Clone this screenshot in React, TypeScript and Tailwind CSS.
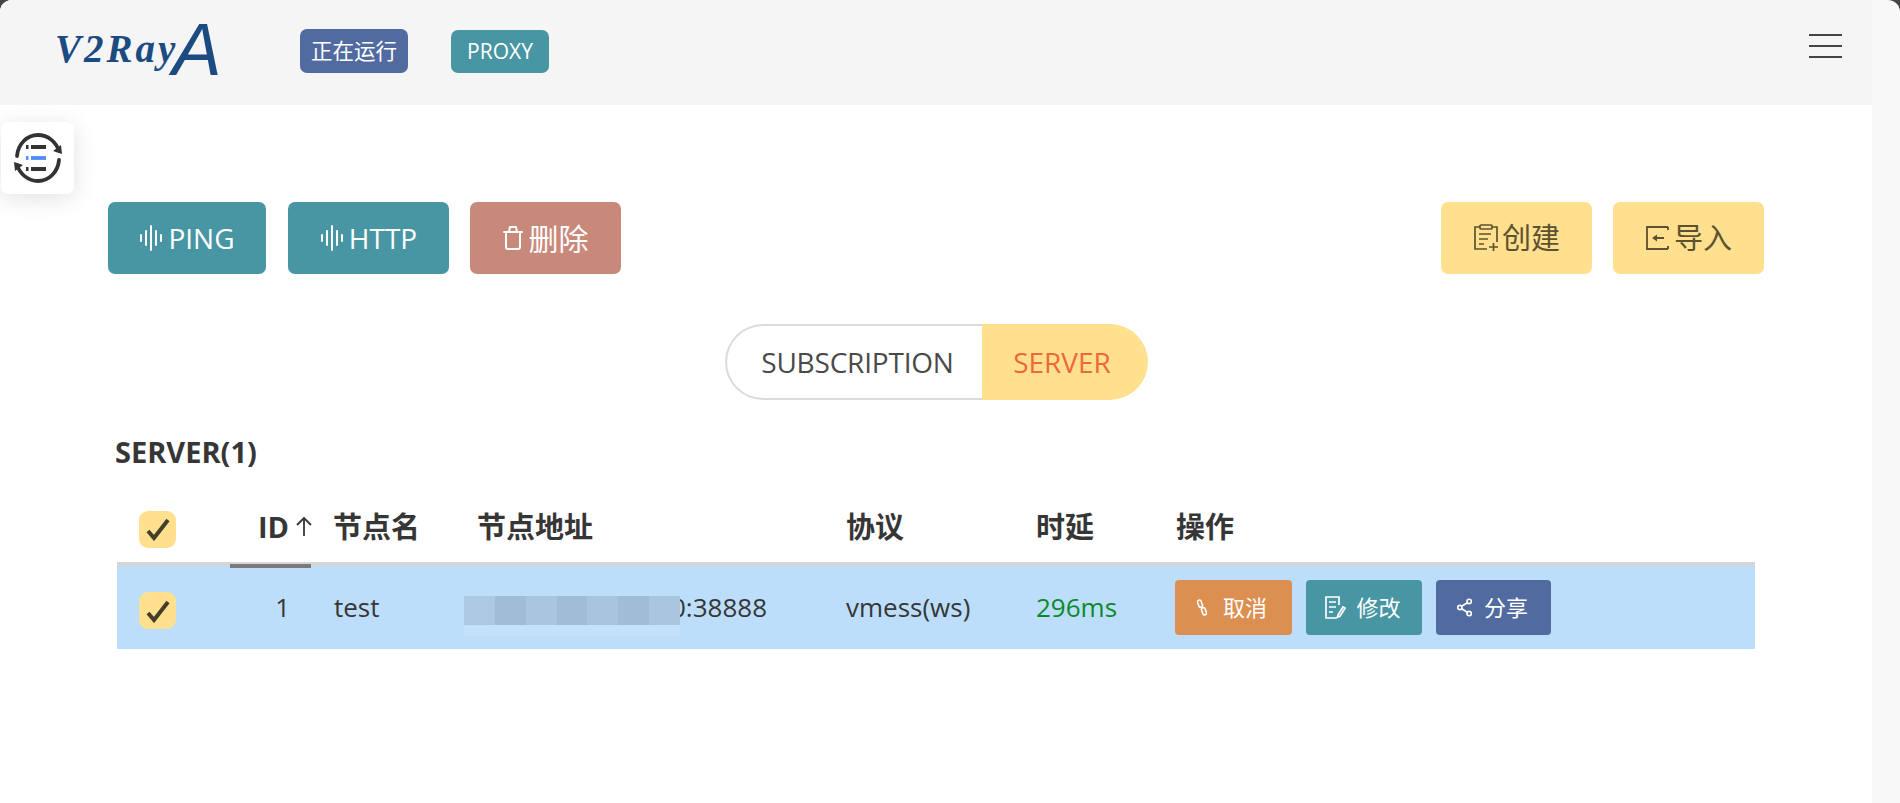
const F = '[font-family:"Open_Sans","Noto_Sans_CJK_SC",sans-serif]';

function Wave() {
  return (
    <svg width="24" height="26" viewBox="0 0 24 26" fill="none" stroke="currentColor" strokeWidth="2" strokeLinecap="round">
      <path d="M2 10v6M7 6v14M12 1v24M17 6v14M22 10v6" />
    </svg>
  );
}
function Trash() {
  return (
    <svg width="20" height="26" viewBox="0 0 20 26" fill="none" stroke="currentColor" strokeWidth="2" strokeLinejoin="round" strokeLinecap="round">
      <path d="M1 7h18M3 7v15a2 2 0 0 0 2 2h10a2 2 0 0 0 2-2V7M6 7l1-5h6l1 5" />
    </svg>
  );
}
function Clip() {
  return (
    <svg width="26" height="28" viewBox="0 0 26 28" fill="none" stroke="currentColor" strokeWidth="1.700">
      <path d="M7 3H2v22h12M19 3h5v15" />
      <rect x="7" y="1" width="12" height="4" rx="1" />
      <path d="M6 10h12M6 15h9M6 20h5M16 23h9M20.500 19v8" />
    </svg>
  );
}
function Imp() {
  return (
    <svg width="24" height="26" viewBox="0 0 24 26" fill="none" stroke="currentColor" strokeWidth="1.800">
      <path d="M23 2H2v22h21M23 2v3M23 24v-3M19 13H11" />
      <path d="M12 9.500l-5 3.500 5 3.500z" fill="currentColor" stroke="none" />
    </svg>
  );
}
function Chain() {
  return (
    <svg width="10" height="17" viewBox="0 0 10 17" fill="none" stroke="currentColor" strokeWidth="1.600">
      <rect x="1.200" y="1" width="3.800" height="7.500" rx="1.900" transform="rotate(-18 3 5)" />
      <rect x="5" y="8.500" width="3.800" height="7.500" rx="1.900" transform="rotate(-18 7 12)" />
    </svg>
  );
}
function Edit() {
  return (
    <svg width="21" height="23" viewBox="0 0 21 23" fill="none" stroke="currentColor" strokeWidth="1.700">
      <path d="M14 9V1H1v21h11M4 6h7M4 11h7M4 16h4M13 19l5-8 2 1.200-5 8-2.500 1z" />
    </svg>
  );
}
function Share() {
  return (
    <svg width="15" height="19" viewBox="0 0 16 20" fill="none" stroke="currentColor" strokeWidth="1.800">
      <circle cx="13" cy="3.500" r="2.300" />
      <circle cx="3" cy="10" r="2.300" />
      <circle cx="13" cy="16.500" r="2.300" />
      <path d="M11 5L5 8.700M5 11.300L11 15" />
    </svg>
  );
}
function Check() {
  return (
    <span className="flex h-[37px] w-[37px] items-center justify-center rounded-[9px] bg-[#fee08f]">
      <svg width="26" height="24" viewBox="0 0 26 24" fill="none" stroke="#453f2a" strokeWidth="4">
        <path d="M3 14l6 7L23 3" />
      </svg>
    </span>
  );
}
function ArrowUp() {
  return (
    <svg width="18" height="20" viewBox="0 0 18 20" fill="none" stroke="#363636" strokeWidth="1.800">
      <path d="M9 20V2M2 9l7-7 7 7" />
    </svg>
  );
}
function ListSync() {
  return (
    <svg width="48" height="50" viewBox="0 0 48 50" fill="none" strokeWidth="3.800">
      <path d="M3 23C4 11 13 2 24 2c10 0 18 7 21 16M45 27c-1 12-10 21-21 21-10 0-18-7-21-16" stroke="#333" strokeLinecap="round" />
      <path d="M39 18l9 3-1-9zM9 32l-9-3 1 9z" fill="#333" />
      <path d="M17 14h15M17 36h15" stroke="#333" />
      <path d="M17 25h15" stroke="#4d8df5" />
      <path d="M12 14h2.500M12 36h2.500" stroke="#333" />
      <path d="M12 25h2.500" stroke="#4d8df5" />
    </svg>
  );
}
function Mosaic() {
  const shades = ['bg-[#adc9e2]', 'bg-[#a1bdd6]', 'bg-[#a9c6de]', 'bg-[#a1bdd6]', 'bg-[#a8c5dd]', 'bg-[#a1bdd6]', 'bg-[#a9c6de]'];
  return (
    <span className="absolute left-0 top-[8px] flex h-[40px] w-[216px] flex-col">
      <span className="flex h-[29px]">
        {shades.map((s, i) => (
          <span key={i} className={'flex-1 ' + s} />
        ))}
      </span>
      <span className="h-[11px] bg-[#c4e1fb]" />
    </span>
  );
}

export default function App() {
  return (
    <div className={'relative h-[803px] w-[1900px] overflow-hidden bg-[#444] text-[#363636] ' + F}>
      <div className="flex h-full overflow-hidden rounded-t-[12px] bg-[#f8f8f8]">
        <div className="w-[1872px] shrink-0 bg-white">
          <header className="flex h-[105px] items-start bg-[#f5f5f6] pl-[55px] pr-[30px]">
            <div className="flex h-[105px] w-[245px] items-start text-[#1c4b82]">
              <span className="mt-[27px] text-[39px] font-bold italic leading-[44px] tracking-[3px] [font-family:'Liberation_Serif',serif]">V2Ray</span>
              <span className="-ml-[6px] mt-[10px] text-[74px] italic leading-[80px] [font-family:'Liberation_Sans',sans-serif]">A</span>
            </div>
            <span className="mt-[29px] flex h-[44px] w-[108px] items-center justify-center rounded-[7px] bg-[#516a9f] text-[21.500px] text-white">正在运行</span>
            <span className="ml-[43px] mt-[30px] flex h-[43px] w-[98px] items-center justify-center rounded-[7px] bg-[#4896a3] text-[21px] text-white">PROXY</span>
            <div className="ml-auto mt-[34px] flex h-[24px] w-[33px] flex-col justify-between">
              <span className="h-[2px] bg-[#444]" />
              <span className="h-[2px] bg-[#444]" />
              <span className="h-[2px] bg-[#444]" />
            </div>
          </header>

          <main className="pl-[108px] pt-[97px]">
            <div className="flex w-[1656px] items-center">
              <button className="flex h-[72px] w-[158px] items-center justify-center gap-[5px] rounded-[7px] bg-[#4896a3] text-[28px] text-white"><Wave />PING</button>
              <button className="ml-[22px] flex h-[72px] w-[161px] items-center justify-center gap-[5px] rounded-[7px] bg-[#4896a3] text-[28px] text-white"><Wave />HTTP</button>
              <button className="ml-[21px] flex h-[72px] w-[151px] items-center justify-center gap-[6px] rounded-[7px] bg-[#c9897a] text-[30px] text-white"><Trash />删除</button>
              <button className="ml-auto flex h-[72px] w-[151px] items-center justify-center gap-[3px] rounded-[7px] bg-[#fee08f] text-[29px] text-[#5d512f]"><Clip />创建</button>
              <button className="ml-[21px] flex h-[72px] w-[151px] items-center justify-center gap-[5px] rounded-[7px] bg-[#fee08f] text-[29px] text-[#5d512f]"><Imp />导入</button>
            </div>

            <div className="mt-[50px] flex h-[76px] w-[423px] translate-x-[617px] text-[28px]">
              <span className="flex w-[257px] items-center justify-center rounded-l-full border-2 border-r-0 border-[#dbdbdb] pl-[6px] text-[#4a4a4a] [letter-spacing:-0.2px]">SUBSCRIPTION</span>
              <span className="flex w-[166px] items-center justify-center rounded-r-full bg-[#fee08f] pr-[6px] text-[#f0683a]">SERVER</span>
            </div>
          </main>

          <section className="pl-[115px]">
            <h2 className="mt-[33px] text-[29px] font-bold leading-[38px]">SERVER(1)</h2>
            <div className="ml-[2px] mt-[25px] w-[1638px]">
              <div className="flex h-[70px] items-center border-b-4 border-[#d6d6d6] text-[29px] font-bold leading-none">
                <div className="flex w-[113px] pl-[22px]"><Check /></div>
                <div className="relative flex h-[70px] w-[103px] items-center pb-[6px] pl-[28px]">
                  ID
                  <span className="ml-[6px]"><ArrowUp /></span>
                  <span className="absolute -bottom-[4px] left-0 h-[4px] w-[81px] bg-[#7a7a7a]" />
                </div>
                <div className="w-[144px] pb-[6px]">节点名</div>
                <div className="w-[369px] pb-[6px]">节点地址</div>
                <div className="w-[190px] pb-[6px]">协议</div>
                <div className="w-[140px] pb-[6px]">时延</div>
                <div className="pb-[6px]">操作</div>
              </div>
              <div className="flex h-[83px] items-center bg-[#bcdefa] text-[26px]">
                <div className="w-[113px] pl-[22px] pt-[6px]"><Check /></div>
                <div className="w-[103px] pl-[21px] pr-[43px] text-right">1</div>
                <div className="w-[131px] pl-[1px]">test</div>
                <div className="relative flex h-[40px] w-[382px] items-center pl-[207px]">
                  0:38888
                  <Mosaic />
                </div>
                <div className="w-[190px]">vmess(ws)</div>
                <div className="w-[139px] text-[#0a8a2e]">296ms</div>
                <div className="flex gap-[14px] text-[22px] text-white">
                  <span className="flex h-[55px] w-[117px] items-center justify-center gap-[16px] rounded-[4px] bg-[#db8f51] pr-[3px]"><Chain />取消</span>
                  <span className="flex h-[55px] w-[116px] items-center justify-center gap-[10px] rounded-[4px] bg-[#4896a3] pr-[2px]"><Edit />修改</span>
                  <span className="flex h-[55px] w-[115px] items-center justify-center gap-[12px] rounded-[4px] bg-[#516a9f] pr-[2px]"><Share />分享</span>
                </div>
              </div>
            </div>
          </section>
        </div>
      </div>

      <div className="absolute left-[1px] top-[122px] flex h-[72px] w-[73px] items-center justify-center rounded-[7px] bg-white shadow-[0_4px_24px_rgba(0,0,0,0.12)]">
        <ListSync />
      </div>
    </div>
  );
}
